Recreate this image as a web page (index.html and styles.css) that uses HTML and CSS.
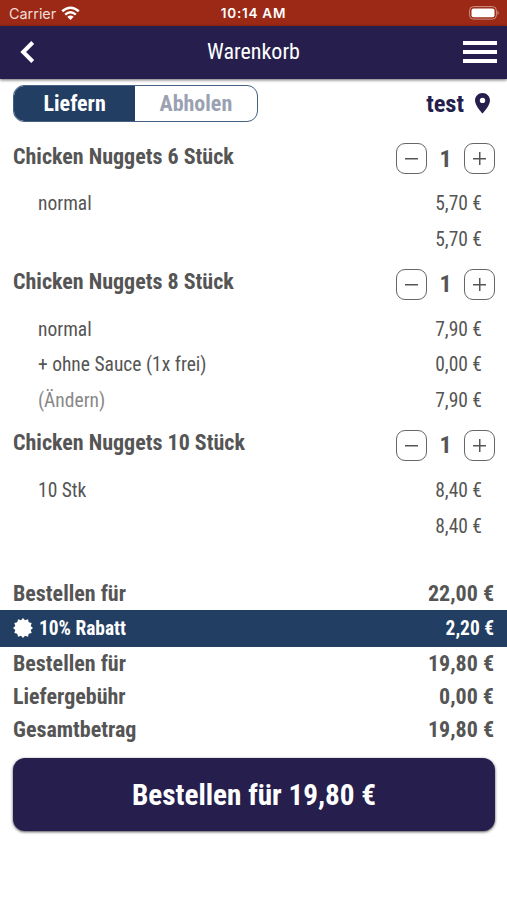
FILE: index.html
```html
<!DOCTYPE html>
<html lang="de">
<head>
<meta charset="utf-8">
<title>Warenkorb</title>
<link rel="stylesheet" href="styles.css">
</head>
<body>
<div class="status">
  <div class="carrier"><span>Carrier</span>
    <svg width="19" height="15" viewBox="0 0 19 15" fill="none" stroke="#fff" stroke-width="2.5"><path d="M1.2 5.3Q9.500-1.800 17.800 5.300M4.200 8.600Q9.500 4 14.800 8.600"/><path d="M9.500 14 6.300 10.800Q9.500 8.300 12.700 10.800Z" fill="#fff" stroke="none"/></svg>
  </div>
  <span class="clock">10:14 AM</span>
  <svg class="battery" width="31" height="14" viewBox="0 0 31 14"><rect x=".6" y=".6" width="26.800" height="12.500" rx="3.800" fill="none" stroke="#cf9186"/><rect x="2.500" y="2.500" width="23" height="8.700" rx="2" fill="#fff"/><path d="M28.500 4.500Q31 6.800 28.500 9.200Z" fill="#cf9186"/></svg>
</div>
<header class="bar">
  <svg width="15" height="22" viewBox="0 0 15 22" fill="none" stroke="#fff" stroke-width="4"><path d="M12.700 1.500 3.200 11 12.700 20.500"/></svg>
  <h1>Warenkorb</h1>
  <div class="menu"><i></i><i></i><i></i></div>
</header>
<div class="mode">
  <div class="toggle"><span class="on">Liefern</span><span>Abholen</span></div>
  <div class="place"><span>test</span>
    <svg width="15" height="21" viewBox="0 0 15 21" fill="#261f4e"><path fill-rule="evenodd" d="M7.500 0C3.300 0 0 3.300 0 7.400 0 12.700 7.500 20.500 7.500 20.500S15 12.700 15 7.400C15 3.300 11.700 0 7.500 0ZM7.500 4.700A2.700 2.700 0 1 1 7.500 10.100 2.700 2.700 0 0 1 7.500 4.700Z"/></svg>
  </div>
</div>
<main>
  <section>
    <div class="item"><h2>Chicken Nuggets 6 Stück</h2><div class="step"><button class="minus"></button><b>1</b><button class="minus plus"></button></div></div>
    <div class="opt"><span>normal</span><span>5,70 €</span></div>
    <div class="opt"><span></span><span>5,70 €</span></div>
  </section>
  <section>
    <div class="item"><h2>Chicken Nuggets 8 Stück</h2><div class="step"><button class="minus"></button><b>1</b><button class="minus plus"></button></div></div>
    <div class="opt"><span>normal</span><span>7,90 €</span></div>
    <div class="opt"><span>+ ohne Sauce (1x frei)</span><span>0,00 €</span></div>
    <div class="opt"><span class="change">(Ändern)</span><span>7,90 €</span></div>
  </section>
  <section>
    <div class="item"><h2>Chicken Nuggets 10 Stück</h2><div class="step"><button class="minus"></button><b>1</b><button class="minus plus"></button></div></div>
    <div class="opt"><span>10 Stk</span><span>8,40 €</span></div>
    <div class="opt"><span></span><span>8,40 €</span></div>
  </section>
</main>
<div class="totals">
  <div class="row"><span>Bestellen für</span><span>22,00 €</span></div>
  <div class="row discount"><span class="label"><svg width="20" height="20" viewBox="-10 -10 20 20" fill="#fff"><path d="M0-10 2-7.700 5-8.700 5.700-5.700 8.700-5 7.700-2 10 0 7.700 2 8.700 5 5.700 5.700 5 8.700 2 7.700 0 10-2 7.700-5 8.700-5.700 5.700-8.700 5-7.700 2-10 0-7.700-2-8.700-5-5.700-5.700-5-8.700-2-7.700Z"/></svg>10% Rabatt</span><span>2,20 €</span></div>
  <div class="row"><span>Bestellen für</span><span>19,80 €</span></div>
  <div class="row"><span>Liefergebühr</span><span>0,00 €</span></div>
  <div class="row"><span>Gesamtbetrag</span><span>19,80 €</span></div>
</div>
<button class="order">Bestellen für 19,80 €</button>
</body>
</html>
```
FILE: styles.css
```css
* { box-sizing: border-box; }
body { margin: 0; height: 900px; overflow: hidden; background: #fff; color: #555; font-family: "Roboto Condensed", Roboto, sans-serif; font-stretch: 75%; }
h1, h2 { margin: 0; }
button { font: inherit; padding: 0; }
svg { display: block; flex: none; }
.status { height: 25.5px; background: #9b2915; color: #fff; display: grid; grid-template-columns: 1fr auto 1fr; align-items: center; padding: 1px 7px 0 9px; font: 14.4px Inter, sans-serif; }
.carrier { display: flex; align-items: center; gap: 5px; color: #f3dcd8; }
.clock { font-weight: 600; font-size: 13.5px; letter-spacing: .75px; margin-right: 2px; }
.battery { justify-self: end; }
.bar { height: 53.500px; background: #261f4e; color: #fff; display: grid; grid-template-columns: 1fr auto 1fr; align-items: center; padding: 0 10px; box-shadow: 0 1px 3px rgba(0,0,0,.6); }
.bar > svg { margin-left: 10px; }
.bar h1 { font-size: 22px; font-weight: 400; padding-bottom: 1px; }
.menu { justify-self: end; width: 34px; display: grid; gap: 5px; }
.menu i { height: 4px; background: #fff; }
.mode { height: 52px; padding: 6px 17px 0 13px; display: flex; justify-content: space-between; align-items: flex-start; }
.toggle { width: 244.5px; height: 37px; border: 1px solid #456080; border-radius: 11px; display: grid; grid-template-columns: 1fr 1fr; overflow: hidden; font-size: 22px; font-weight: 700; color: #9aa1b2; line-height: 35px; text-align: center; }
.toggle .on { background: #233e63; color: #fff; }
.place { height: 37px; display: flex; align-items: center; gap: 11px; color: #261f4e; font-size: 24.5px; font-weight: 700; }
.item { height: 55px; padding: 0 12px 0 13px; display: flex; align-items: center; justify-content: space-between; }
.item h2 { font-size: 22px; font-weight: 700; padding-bottom: 5px; }
.step { display: flex; align-items: center; }
.step b { width: 37px; text-align: center; font-size: 24px; }
.minus { width: 31px; height: 31px; border: 1px solid #666; border-radius: 9px; background: linear-gradient(#555, #555) center / 13px 1.500px no-repeat #fff; }
.plus { background: linear-gradient(#555, #555) center / 13px 1.500px no-repeat, linear-gradient(#555, #555) center / 1.500px 13px no-repeat; }
main { padding-bottom: 33.500px; }
.opt { height: 35.400px; padding: 0 25px 0 38px; display: flex; align-items: center; justify-content: space-between; font-size: 19.5px; }
.change { color: #888; }
.row { height: 33px; padding: 0 13px; display: flex; align-items: center; justify-content: space-between; font-size: 22px; font-weight: 700; }
.discount { height: 36.500px; background: #233e63; color: #fff; font-size: 19.4px; }
.label { display: flex; align-items: center; gap: 6px; }
.order { display: block; width: 482px; height: 73px; margin: 12.500px 12px 0 13px; border: 0; border-radius: 12px; background: #261f4e; color: #fff; font-size: 29.200px; font-weight: 700; box-shadow: 0 1px 3px rgba(0,0,0,.7); }
```
